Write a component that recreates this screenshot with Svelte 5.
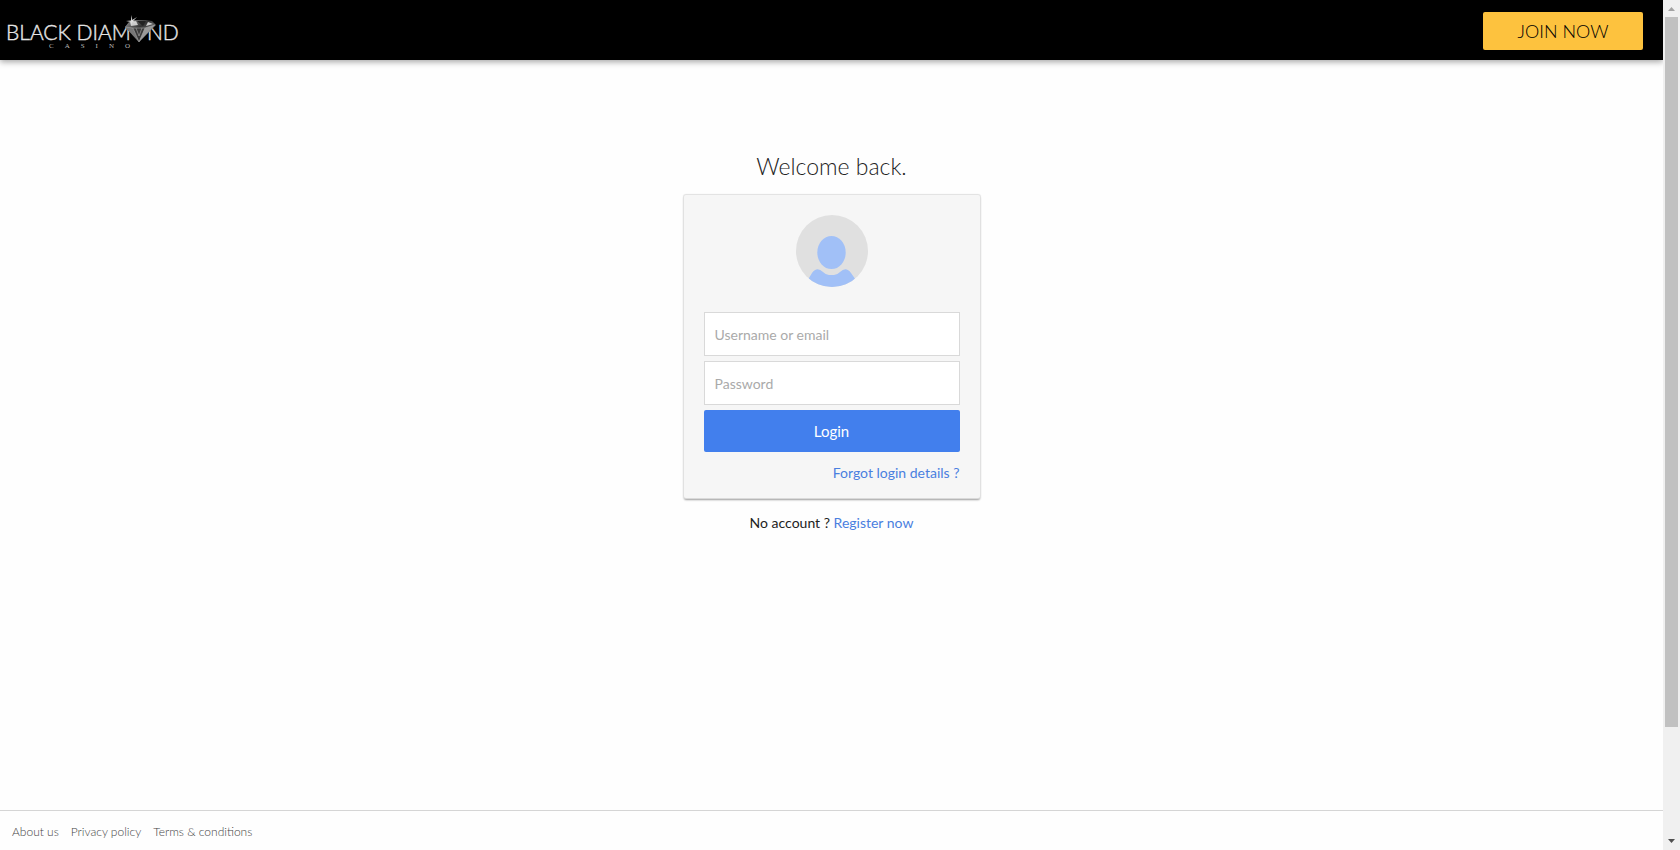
<script lang="ts">
  let username = $state('');
  let password = $state('');

  const footerLinks = ['About us', 'Privacy policy', 'Terms & conditions'];

  function handleSubmit(e: Event) {
    e.preventDefault();
  }
</script>

<div class="window">
  <div class="page">
    <header class="topbar">
      <a class="logo" href="#home" aria-label="Black Diamond Casino">
        <svg width="190" height="60" viewBox="0 0 190 60">
          <defs>
            <linearGradient id="stone" x1="0" y1="0" x2="1" y2="1">
              <stop offset="0" stop-color="#999" />
              <stop offset="0.4" stop-color="#333" />
              <stop offset="0.7" stop-color="#777" />
              <stop offset="1" stop-color="#222" />
            </linearGradient>
          </defs>
          <text class="brand" x="6" y="40">BLACK DIAM</text>
          <text class="brand" x="147" y="40">ND</text>
          <text class="brand-sub" x="49" y="48">CASINO</text>
          <path d="M125 27 L129 22 L134 20 L146 20 L152 21 L156 25 L139 42 Z" fill="url(#stone)" />
          <path d="M125 27 L133 28 L139 42 Z" fill="#777" />
          <path d="M133 28 L145 28 L139 42 Z" fill="#3a3a3a" />
          <path d="M145 28 L155 25 L139 42 Z" fill="#999" />
          <path d="M130 22 L136 21 L138 25 L131 26 Z M148 22 L153 24 L146 26 Z" fill="#ccc" />
          <path d="M137 21 L146 21 L143 26 Z" fill="#222" />
          <path d="M125 27 L133 28 L145 28 L155 25 M133 28 L139 42 L145 28 M136 28 L139 36 L142 28" fill="none" stroke="#aaa" stroke-width="0.6" />
          <path d="M131.5 15 L132.3 20 L137 17 L133 21 L137 23 L132.5 22 L131 25 L131 22 L126 21 L131 20.5 Z" fill="#ddd" />
        </svg>
      </a>
      <button type="button" class="join-btn">JOIN NOW</button>
    </header>

    <main class="content">
      <h1>Welcome back.</h1>

      <form class="card" onsubmit={handleSubmit}>
        <svg class="avatar" width="72" height="72" viewBox="0 0 72 72" aria-hidden="true">
          <clipPath id="disc"><circle cx="36" cy="36" r="36" /></clipPath>
          <g clip-path="url(#disc)">
            <rect width="72" height="72" fill="#e0e0e0" />
            <ellipse cx="35.5" cy="37.5" rx="14.2" ry="16.5" fill="#a1c0f7" />
            <path d="M10 68 L16 58 Q21 51 27 57 Q30 60 33 60 L38 60 Q41 60 44 57 Q50 51 55 58 L62 68 L60 74 L12 74 Z" fill="#a1c0f7" />
          </g>
        </svg>
        <input type="text" aria-label="Username or email" placeholder="Username or email" bind:value={username} />
        <input type="password" aria-label="Password" placeholder="Password" bind:value={password} />
        <button type="submit" class="login-btn">Login</button>
        <a class="forgot" href="#forgot">Forgot login details ?</a>
      </form>

      <p class="register">No account ? <a href="#register">Register now</a></p>
    </main>

    <footer class="footer">
      {#each footerLinks as label (label)}
        <a href="#footer">{label}</a>
      {/each}
    </footer>
  </div>

  <div class="scrollbar" aria-hidden="true">
    <svg width="17" height="17" viewBox="0 0 17 17"><path d="M5 11 L12 11 L8.5 7 Z" fill="#a3a3a3" /></svg>
    <div class="track"><div class="thumb"></div></div>
    <svg width="17" height="17" viewBox="0 0 17 17"><path d="M5 6 L12 6 L8.5 10 Z" fill="#505050" /></svg>
  </div>
</div>

<style>
  :global(body) {
    margin: 0;
    background: #fefefe;
  }

  .window {
    display: flex;
    min-height: 100vh;
    font-family: Lato, sans-serif;
    font-size: 14px;
    line-height: 20px;
    color: #222;
  }

  .page {
    flex: 1;
    min-width: 0;
    display: flex;
    flex-direction: column;
  }

  .topbar {
    display: flex;
    align-items: center;
    justify-content: space-between;
    height: 60px;
    padding-right: 20px;
    background: #000;
    box-shadow: 0 2px 6px rgba(0, 0, 0, 0.35);
  }

  .logo,
  .logo svg {
    display: block;
  }

  .brand {
    font-size: 21px;
    font-weight: 300;
    fill: #e4e4e4;
    stroke: #e4e4e4;
    stroke-width: 0.4;
  }

  .brand-sub {
    font-family: "Liberation Serif", serif;
    font-size: 7px;
    letter-spacing: 11px;
    fill: #bbb;
  }

  .join-btn {
    width: 160px;
    height: 38px;
    margin-top: 2px;
    border: none;
    border-radius: 2px;
    background: #fdc23e;
    color: #000;
    font-family: inherit;
    font-size: 18px;
    font-weight: 300;
    cursor: pointer;
  }

  .content {
    flex: 1;
    display: flex;
    flex-direction: column;
    align-items: center;
    padding-top: 90px;
  }

  h1 {
    margin: 0 0 13px;
    font-size: 23px;
    line-height: 32px;
    font-weight: 300;
    color: #222;
  }

  .card {
    box-sizing: border-box;
    display: flex;
    flex-direction: column;
    gap: 5px;
    width: 296px;
    padding: 20px 20px 15px;
    border-radius: 2px;
    background: #f6f6f6;
    box-shadow: 0 0 1px 1px #e0e0e0, 0 2px 2px rgba(0, 0, 0, 0.4);
  }

  .avatar {
    align-self: center;
    margin-bottom: 20px;
  }

  input {
    box-sizing: border-box;
    width: 100%;
    height: 44px;
    padding: 0 10px;
    border: 1px solid #d9d9d9;
    border-radius: 0;
    background: #fff;
    font-family: inherit;
    font-size: 14px;
    color: #333;
  }

  input::placeholder {
    color: #aaa;
  }

  .login-btn {
    height: 42px;
    border: none;
    border-radius: 2px;
    background: #427fed;
    color: #fff;
    font-family: inherit;
    font-size: 15px;
    cursor: pointer;
  }

  a {
    color: #4a7fe0;
    text-decoration: none;
  }

  .forgot {
    align-self: flex-end;
    margin-top: 6px;
  }

  .register {
    margin: 15px 0;
  }

  .footer {
    display: flex;
    gap: 12px;
    padding: 11px 12px 8px;
    border-top: 1px solid #d5d5d5;
    font-size: 12px;
  }

  .footer a {
    color: #444;
    font-weight: 300;
  }

  .scrollbar {
    display: flex;
    flex-direction: column;
    width: 17px;
    background: #f0f0f0;
  }

  .scrollbar svg {
    display: block;
  }

  .track {
    flex: 1;
    padding: 0 2px;
  }

  .thumb {
    height: 87%;
    background: #c1c1c1;
  }
</style>
